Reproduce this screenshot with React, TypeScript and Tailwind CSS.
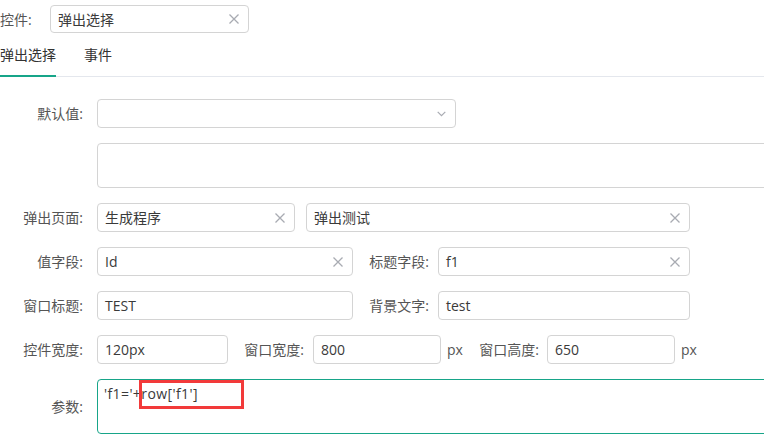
import React from 'react';

const ClearIcon = () => (
  <svg width="10" height="10" viewBox="0 0 10 10" className="shrink-0">
    <path d="M0.5 0.5 L9.5 9.5 M9.5 0.5 L0.5 9.5" stroke="#a8abb2" strokeWidth="1.3" fill="none" />
  </svg>
);

const ChevronIcon = () => (
  <svg width="9" height="6" viewBox="0 0 9 6" className="shrink-0">
    <path d="M0.7 0.8 L4.5 4.6 L8.3 0.8" stroke="#a8abb2" strokeWidth="1.2" fill="none" />
  </svg>
);

interface FieldProps {
  value?: string;
  width: string;
  clearable?: boolean;
}

const Field: React.FC<FieldProps> = ({ value = '', width, clearable }) => (
  <div className={`${width} h-[29px] shrink-0 flex items-center justify-between pl-[7px] pr-[9px] border border-[#d4d4d4] rounded-[4px] bg-white`}>
    <span className="text-[14px] text-[#3a3a3a] leading-none">{value}</span>
    {clearable && <ClearIcon />}
  </div>
);

const Label: React.FC<{ text: string; width: string }> = ({ text, width }) => (
  <span className={`${width} shrink-0 text-right text-[14px] text-[#555] pr-[14px]`}>{text}:</span>
);

const InlineLabel: React.FC<{ text: string }> = ({ text }) => (
  <span className="w-[85px] shrink-0 text-right text-[14px] text-[#555] pr-[9px]">{text}:</span>
);

export default function App() {
  return (
    <div className="w-[764px] h-[440px] overflow-hidden bg-white font-['Open_Sans','Noto_Sans_CJK_SC',sans-serif]">
      {/* Control selector */}
      <div className="flex items-center pt-[5px]">
        <span className="w-[50px] shrink-0 text-[14px] text-[#555]">控件:</span>
        <div className="w-[199px] h-[28px] flex items-center justify-between pl-[7px] pr-[9px] border border-[#d4d4d4] rounded-[4px]">
          <span className="text-[14px] text-[#3a3a3a]">弹出选择</span>
          <ClearIcon />
        </div>
      </div>

      {/* Tabs */}
      <div className="flex h-[44px] border-b border-[#e4e7ed] w-[764px]">
        <div className="relative flex items-center text-[14px] text-[#333]">
          弹出选择
          <div className="absolute left-0 right-0 bottom-[-1px] h-[2px] bg-[#17a589]" />
        </div>
        <div className="flex items-center ml-[28px] text-[14px] text-[#333]">事件</div>
      </div>

      {/* Form */}
      <div className="flex flex-col gap-[15px] pt-[22px]">
        <div className="flex items-center">
          <Label text="默认值" width="w-[97px]" />
          <div className="w-[359px] h-[29px] flex items-center justify-end pr-[9px] border border-[#d4d4d4] rounded-[4px]">
            <ChevronIcon />
          </div>
        </div>

        <div className="flex">
          <div className="w-[97px] shrink-0" />
          <div className="w-[720px] h-[45px] shrink-0 border border-[#d4d4d4] rounded-[4px]" />
        </div>

        <div className="flex items-center">
          <Label text="弹出页面" width="w-[97px]" />
          <Field value="生成程序" width="w-[198px]" clearable />
          <div className="w-[11px] shrink-0" />
          <Field value="弹出测试" width="w-[384px]" clearable />
        </div>

        <div className="flex items-center">
          <Label text="值字段" width="w-[97px]" />
          <Field value="Id" width="w-[256px]" clearable />
          <InlineLabel text="标题字段" />
          <Field value="f1" width="w-[252px]" clearable />
        </div>

        <div className="flex items-center">
          <Label text="窗口标题" width="w-[97px]" />
          <Field value="TEST" width="w-[256px]" />
          <InlineLabel text="背景文字" />
          <Field value="test" width="w-[252px]" />
        </div>

        <div className="flex items-center">
          <Label text="控件宽度" width="w-[97px]" />
          <Field value="120px" width="w-[131px]" />
          <InlineLabel text="窗口宽度" />
          <Field value="800" width="w-[128px]" />
          <span className="ml-[6px] text-[14px] text-[#555]">px</span>
          <span className="w-[84px] shrink-0 text-right text-[14px] text-[#555] pr-[8px]">窗口高度:</span>
          <Field value="650" width="w-[128px]" />
          <span className="ml-[6px] text-[14px] text-[#555]">px</span>
        </div>

        <div className="flex items-center">
          <Label text="参数" width="w-[97px]" />
          <div className="relative w-[720px] h-[55px] shrink-0 border border-[#17a589] rounded-[4px] px-[6px] pt-[1px]">
            <span className="text-[14px] text-[#3a3a3a] leading-[20px] tracking-[0.4px]">'f1='+row['f1']</span>
            <div className="absolute left-[41px] top-0 w-[105px] h-[29px] border-[3px] border-[#f23a3a]" />
          </div>
        </div>
      </div>
    </div>
  );
}
